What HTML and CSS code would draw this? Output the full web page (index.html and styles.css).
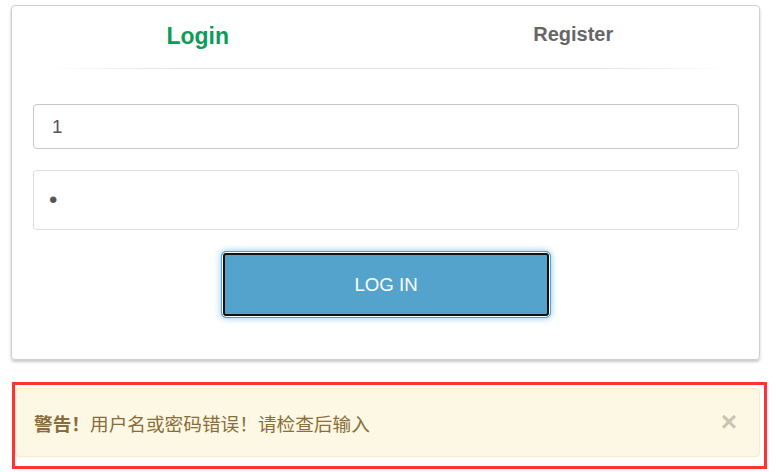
FILE: index.html
```html
<!DOCTYPE html>
<html lang="zh-CN">
<head>
<meta charset="utf-8">
<title>Login</title>
<link rel="stylesheet" href="styles.css">
</head>
<body>
<div class="page">
  <div class="card">
    <div class="tabs">
      <div class="tab tab-active">Login</div>
      <div class="tab tab-other">Register</div>
    </div>
    <div class="divider"></div>
    <form class="form">
      <input class="field field-user" type="text" value="1">
      <input class="field field-pass" type="password" value="1">
      <button class="btn" type="button">LOG IN</button>
    </form>
  </div>
  <div class="alert-frame">
    <div class="alert">
      <div class="alert-text"><strong>警告！</strong>用户名或密码错误！请检查后输入</div>
      <span class="close">×</span>
    </div>
  </div>
</div>
</body>
</html>
```

FILE: styles.css
```css
html, body {
  margin: 0;
  padding: 0;
  background: #fff;
}
body {
  font-family: "Liberation Sans", Arial, "Noto Sans CJK SC", sans-serif;
}
.page {
  padding: 5px 0 0 11px;
  width: 756px;
}
.card {
  width: 747px;
  height: 353px;
  border: 1px solid #cfcfcf;
  border-radius: 4px;
  box-shadow: 0 2px 3px rgba(0, 0, 0, 0.22);
  box-sizing: content-box;
  display: flex;
  flex-direction: column;
}
.tabs {
  display: flex;
  align-items: flex-start;
  height: 62px;
}
.tab {
  flex: 1;
  text-align: center;
  font-weight: bold;
  line-height: 30px;
}
.tab-active {
  color: #0e9c5a;
  font-size: 23px;
  margin-top: 15px;
  padding-right: 2px;
}
.tab-other {
  color: #666;
  font-size: 20px;
  margin-top: 13px;
  padding-left: 2px;
}
.divider {
  height: 1px;
  margin: 0 32px 0 35px;
  background: linear-gradient(to right, rgba(221,221,221,0), #e2e2e2 20%, #e2e2e2 80%, rgba(221,221,221,0));
}
.form {
  display: flex;
  flex-direction: column;
  align-items: center;
  margin: 35px 20px 0 21px;
}
.field {
  box-sizing: border-box;
  width: 100%;
  margin: 0 0 21px 0;
  padding: 0 18px;
  border-radius: 4px;
  font-family: "Liberation Sans", Arial, sans-serif;
  font-size: 18.67px;
  color: #555;
  background: #fff;
  outline: none;
}
.field-user {
  height: 45px;
  border: 1px solid #c8c8c8;
}
.field-pass {
  height: 60px;
  border: 1px solid #dedede;
  font-size: 24px;
  padding-left: 15px;
}
.btn {
  width: 330px;
  height: 67px;
  margin: 0;
  padding: 0;
  border: 1px solid #4b9fd3;
  border-radius: 5px;
  background: #53a3cd;
  color: #fff;
  font-family: "Liberation Sans", Arial, sans-serif;
  font-size: 18.67px;
  box-shadow: inset 0 0 0 1px #ffffff, inset 0 0 0 3px #111111, 0 0 7px rgba(102, 175, 233, 0.75);
  cursor: pointer;
}
.alert-frame {
  margin: 22px 0 0 1px;
  width: 745px;
  border: 3px solid #ff3333;
  padding: 3px 4px 9px 0;
}
.alert {
  box-sizing: border-box;
  height: 69px;
  display: flex;
  align-items: center;
  justify-content: space-between;
  padding: 0 22px 0 18px;
  background: #fcf8e3;
  border: 1px solid #f8ebc9;
  border-radius: 4px;
  color: #8a6d3b;
  font-family: "Liberation Sans", Arial, "Noto Sans CJK SC", sans-serif;
  font-size: 18.67px;
}
.alert-text strong {
  font-weight: bold;
}
.close {
  font-size: 28px;
  font-weight: bold;
  line-height: 1;
  color: #000;
  opacity: 0.2;
  margin-top: -2px;
}
```
